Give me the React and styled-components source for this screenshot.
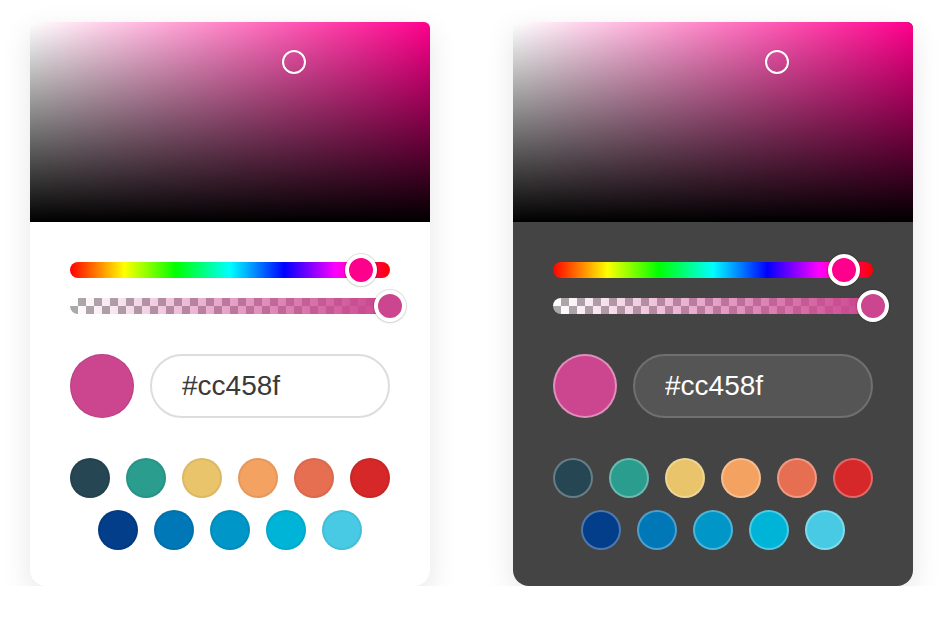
import React from 'react';
import styled, { createGlobalStyle, css } from 'styled-components';

const GlobalStyle = createGlobalStyle`
  body {
    margin: 0;
    background: #ffffff;
    font-family: "Liberation Sans", Arial, sans-serif;
  }
`;

// #cc458f in hsv
const HUE = 327;
const SAT = 0.66;
const VAL = 0.8;
const HEX = '#cc458f';

const SWATCHES = [
  '#264653',
  '#2a9d8f',
  '#e9c46a',
  '#f4a261',
  '#e76f51',
  '#d62828',
  '#023e8a',
  '#0077b6',
  '#0096c7',
  '#00b4d8',
  '#48cae4',
];

const ColorPicker = ({ dark }) => {
  return (
    <Card $dark={dark}>
      <Saturation $hue={HUE}>
        <Pointer style={{ left: `${SAT * 100}%`, top: `${(1 - VAL) * 100}%` }} />
      </Saturation>
      <Body>
        <Sliders>
          <HueTrack>
            <Thumb
              $dark={dark}
              $color={`hsl(${HUE}, 100%, 50%)`}
              style={{ left: `${(HUE / 360) * 100}%` }}
            />
          </HueTrack>
          <AlphaTrack $color={HEX}>
            <Thumb $dark={dark} $color={HEX} style={{ left: '100%' }} />
          </AlphaTrack>
        </Sliders>
        <PreviewRow>
          <Preview $dark={dark} $color={HEX} />
          <HexInput $dark={dark} defaultValue={HEX} spellCheck={false} />
        </PreviewRow>
        <Swatches>
          {SWATCHES.map((c) => (
            <Swatch key={c} $dark={dark} $color={c} />
          ))}
        </Swatches>
      </Body>
    </Card>
  );
};

const App = () => (
  <>
    <GlobalStyle />
    <Page>
      <ColorPicker />
      <ColorPicker dark />
    </Page>
  </>
);

const Page = styled.div`
  display: flex;
  gap: 83px;
  padding: 22px 0 0 30px;
`;

const Card = styled.div`
  width: 400px;
  border-radius: 0 6px 16px 16px;
  background: ${({ $dark }) => ($dark ? '#444444' : '#ffffff')};
  box-shadow: 0 10px 30px rgba(0, 0, 0, 0.1);
`;

const Saturation = styled.div`
  position: relative;
  height: 200px;
  border-radius: 0 6px 0 0;
  background: linear-gradient(to top, #000, rgba(0, 0, 0, 0)),
    linear-gradient(to right, #fff, ${({ $hue }) => `hsl(${$hue}, 100%, 50%)`});
`;

const Pointer = styled.div`
  position: absolute;
  width: 24px;
  height: 24px;
  box-sizing: border-box;
  border: 2px solid #fff;
  border-radius: 50%;
  transform: translate(-50%, -50%);
  box-shadow: 0 0 1px rgba(0, 0, 0, 0.3);
`;

const Body = styled.div`
  padding: 40px 40px 36px;
`;

const Sliders = styled.div`
  display: flex;
  flex-direction: column;
  gap: 20px;
`;

const track = css`
  position: relative;
  height: 16px;
  border-radius: 8px;
`;

const HueTrack = styled.div`
  ${track};
  background: linear-gradient(
    to right,
    #f00 0%,
    #ff0 17%,
    #0f0 33%,
    #0ff 50%,
    #00f 67%,
    #f0f 83%,
    #f00 100%
  );
`;

const AlphaTrack = styled.div`
  ${track};
  background: linear-gradient(to right, rgba(204, 69, 143, 0), ${({ $color }) => $color}),
    repeating-conic-gradient(#aaa 0 25%, #fff 0 50%) 0 0 / 16px 16px;
`;

const Thumb = styled.div`
  position: absolute;
  top: 50%;
  width: 32px;
  height: 32px;
  box-sizing: border-box;
  border-radius: 50%;
  border: 4px solid #fff;
  background: ${({ $color }) => $color};
  transform: translate(-50%, -50%);
  box-shadow: ${({ $dark }) =>
    $dark ? '0 0 2px rgba(0, 0, 0, 0.4)' : '0 0 0 1px rgba(0, 0, 0, 0.1), 0 1px 3px rgba(0, 0, 0, 0.1)'};
`;

const PreviewRow = styled.div`
  display: flex;
  align-items: center;
  gap: 16px;
  margin-top: 40px;
`;

const Preview = styled.div`
  flex: none;
  width: 64px;
  height: 64px;
  box-sizing: border-box;
  border-radius: 50%;
  background: ${({ $color }) => $color};
  border: ${({ $dark }) =>
    $dark ? '2px solid rgba(255, 255, 255, 0.4)' : '1px solid rgba(0, 0, 0, 0.1)'};
`;

const HexInput = styled.input`
  width: 240px;
  height: 64px;
  box-sizing: border-box;
  padding: 0 0 0 30px;
  border-radius: 32px;
  outline: none;
  font-family: "Liberation Sans", Arial, sans-serif;
  font-size: 28px;
  background: ${({ $dark }) => ($dark ? '#555555' : '#ffffff')};
  color: ${({ $dark }) => ($dark ? '#ffffff' : '#3a3a3a')};
  border: 2px solid ${({ $dark }) => ($dark ? '#707070' : '#dddddd')};
`;

const Swatches = styled.div`
  display: flex;
  flex-wrap: wrap;
  justify-content: center;
  gap: 12px 16px;
  margin-top: 40px;
`;

const Swatch = styled.div`
  width: 40px;
  height: 40px;
  box-sizing: border-box;
  border-radius: 50%;
  background: ${({ $color }) => $color};
  border: 2px solid
    ${({ $dark }) => ($dark ? 'rgba(255, 255, 255, 0.3)' : 'rgba(0, 0, 0, 0.06)')};
`;

export default App;
